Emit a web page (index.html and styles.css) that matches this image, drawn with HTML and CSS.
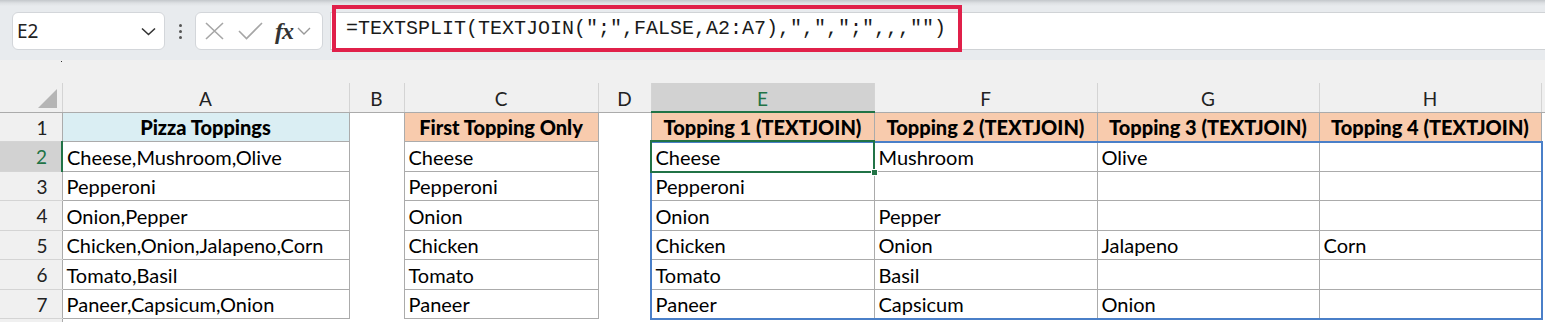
FILE: index.html
```html
<!DOCTYPE html>
<html lang="en">

    <head>

        <meta charset="UTF-8">
        <meta name="viewport" content="width=device-width, initial-scale=1.0">
        <title>TEXTSPLIT with TEXTJOIN</title>

        <link rel="stylesheet" href="styles.css">

    </head>

    <body>

        <header class="formula-bar">

            <div class="name-box">
                <span class="name-box-text">E2</span>
                <svg class="chevron" width="15" height="9" viewBox="0 0 15 9"><path d="M1 1.5 L7.5 7.5 L14 1.5" fill="none" stroke="#333" stroke-width="1.6"/></svg>
            </div>

            <div class="grip">
                <span></span><span></span><span></span>
            </div>

            <div class="fn-box">
                <svg width="19" height="18" viewBox="0 0 19 18"><path d="M1 1 L18 17 M18 1 L1 17" stroke="#a6a6a6" stroke-width="1.6"/></svg>
                <svg width="25" height="18" viewBox="0 0 25 18"><path d="M1 9 L8.5 16.5 L24 1" fill="none" stroke="#a6a6a6" stroke-width="1.6"/></svg>
                <span class="fx">fx</span>
                <svg class="chevron" width="14" height="8" viewBox="0 0 14 8"><path d="M1 1 L7 7 L13 1" fill="none" stroke="#999" stroke-width="1.4"/></svg>
            </div>

            <div class="formula-input">
                <div class="formula-highlight">=TEXTSPLIT(TEXTJOIN(";",FALSE,A2:A7),",",";",,,"")</div>
            </div>

        </header>

        <div class="strip"><span class="speck"></span></div>

        <main class="sheet">

            <table class="grid">
                <colgroup>
                    <col class="w-head">
                    <col class="w-a">
                    <col class="w-b">
                    <col class="w-c">
                    <col class="w-d">
                    <col class="w-e">
                    <col class="w-f">
                    <col class="w-g">
                    <col class="w-h">
                    <col class="w-rest">
                </colgroup>

                <tr class="col-heads">
                    <th class="corner"><span class="triangle"></span></th>
                    <th>A</th>
                    <th>B</th>
                    <th>C</th>
                    <th>D</th>
                    <th class="active-col">E</th>
                    <th>F</th>
                    <th>G</th>
                    <th>H</th>
                    <th class="rest"></th>
                </tr>

                <tr class="r-odd">
                    <td class="row-head">1</td>
                    <td class="cell title blue">Pizza Toppings</td>
                    <td></td>
                    <td class="cell title peach">First Topping Only</td>
                    <td></td>
                    <td class="cell title peach">Topping 1 (TEXTJOIN)</td>
                    <td class="cell title peach">Topping 2 (TEXTJOIN)</td>
                    <td class="cell title peach">Topping 3 (TEXTJOIN)</td>
                    <td class="cell title peach">Topping 4 (TEXTJOIN)</td>
                    <td></td>
                </tr>

                <tr class="r-even">
                    <td class="row-head active-row">2</td>
                    <td class="cell">Cheese,Mushroom,Olive</td>
                    <td></td>
                    <td class="cell">Cheese</td>
                    <td></td>
                    <td class="cell">Cheese</td>
                    <td class="cell">Mushroom</td>
                    <td class="cell">Olive</td>
                    <td class="cell"></td>
                    <td></td>
                </tr>

                <tr class="r-odd">
                    <td class="row-head">3</td>
                    <td class="cell">Pepperoni</td>
                    <td></td>
                    <td class="cell">Pepperoni</td>
                    <td></td>
                    <td class="cell">Pepperoni</td>
                    <td class="cell"></td>
                    <td class="cell"></td>
                    <td class="cell"></td>
                    <td></td>
                </tr>

                <tr class="r-even">
                    <td class="row-head">4</td>
                    <td class="cell">Onion,Pepper</td>
                    <td></td>
                    <td class="cell">Onion</td>
                    <td></td>
                    <td class="cell">Onion</td>
                    <td class="cell">Pepper</td>
                    <td class="cell"></td>
                    <td class="cell"></td>
                    <td></td>
                </tr>

                <tr class="r-odd">
                    <td class="row-head">5</td>
                    <td class="cell">Chicken,Onion,Jalapeno,Corn</td>
                    <td></td>
                    <td class="cell">Chicken</td>
                    <td></td>
                    <td class="cell">Chicken</td>
                    <td class="cell">Onion</td>
                    <td class="cell">Jalapeno</td>
                    <td class="cell">Corn</td>
                    <td></td>
                </tr>

                <tr class="r-even">
                    <td class="row-head">6</td>
                    <td class="cell">Tomato,Basil</td>
                    <td></td>
                    <td class="cell">Tomato</td>
                    <td></td>
                    <td class="cell">Tomato</td>
                    <td class="cell">Basil</td>
                    <td class="cell"></td>
                    <td class="cell"></td>
                    <td></td>
                </tr>

                <tr class="r-odd">
                    <td class="row-head">7</td>
                    <td class="cell">Paneer,Capsicum,Onion</td>
                    <td></td>
                    <td class="cell">Paneer</td>
                    <td></td>
                    <td class="cell">Paneer</td>
                    <td class="cell">Capsicum</td>
                    <td class="cell">Onion</td>
                    <td class="cell"></td>
                    <td></td>
                </tr>

                <tr class="r-last">
                    <td class="row-head"></td>
                    <td></td><td></td><td></td><td></td><td></td><td></td><td></td><td></td><td></td>
                </tr>
            </table>

            <!-- spill range outline and active cell sit on top of the grid -->
            <div class="spill-range"></div>
            <div class="active-cell"><span class="fill-handle"></span></div>

        </main>

    </body>

</html>
```

FILE: styles.css
```css
* 
    {
        margin: 0;
        padding: 0;
        box-sizing: border-box;
    }

body 
    {
        font-family: 'Lato', 'Liberation Sans', sans-serif;
        background-color: #f0f0f0;
        width: 1545px;
        height: 322px;
        overflow: hidden;
    }

/* ---------- formula bar ---------- */

.formula-bar 
    {
        height: 60px;
        display: flex;
        align-items: flex-start;
        background: linear-gradient(#c3c7cb 0, #dde0e3 3px, #e8ebee 6px, #e8ebee 100%);
        padding-top: 12px;
        padding-left: 12px;
    }

.name-box 
    {
        width: 153px;
        height: 38px;
        background-color: #fff;
        border: 1px solid #d3d6da;
        border-radius: 6px;
        display: flex;
        align-items: center;
        justify-content: space-between;
        padding: 0 8px 0 4px;
    }

.name-box-text 
    {
        font-family: 'Noto Sans', sans-serif;
        font-size: 19px;
        color: #222;
    }

.grip 
    {
        width: 30px;
        height: 38px;
        display: flex;
        flex-direction: column;
        align-items: center;
        justify-content: center;
        gap: 3px;
    }

.grip span 
    {
        width: 3px;
        height: 3px;
        background-color: #555;
        border-radius: 50%;
    }

.fn-box 
    {
        width: 128px;
        height: 38px;
        background-color: #fff;
        border: 1px solid #d3d6da;
        border-radius: 6px;
        display: flex;
        align-items: center;
        padding-left: 9px;
        gap: 14px;
    }

.fn-box .fx 
    {
        font-family: 'Liberation Serif', serif;
        font-style: italic;
        font-weight: bold;
        font-size: 24px;
        color: #333;
        margin-left: -2px;
        margin-right: -10px;
        letter-spacing: -1px;
    }

.formula-input 
    {
        flex: 1;
        height: 38px;
        margin-left: 7px;
        border-left: 1px solid #d0d3d6;
        border-top: 1px solid #d0d3d6;
        border-bottom: 1px solid #cfd2d5;
        background-color: #fff;
        position: relative;
    }

.formula-highlight 
    {
        position: absolute;
        left: 1px;
        top: -8px;
        width: 630px;
        height: 47px;
        border: 4px solid #e0204a;
        font-family: 'Liberation Mono', monospace;
        font-size: 20px;
        color: #1a1a1a;
        padding-left: 10px;
        line-height: 39px;
        white-space: nowrap;
    }

.strip 
    {
        height: 23px;
        position: relative;
    }

.speck 
    {
        position: absolute;
        left: 61px;
        top: 1px;
        width: 1px;
        height: 1px;
        background-color: #333;
    }

/* ---------- sheet grid ---------- */

.sheet 
    {
        position: relative;
    }

.grid 
    {
        border-collapse: collapse;
        table-layout: fixed;
        width: 1545px;
        font-size: 20px;
        color: #000;
    }

.w-head { width: 62px; }
.w-a { width: 287px; }
.w-b { width: 55px; }
.w-c { width: 194px; }
.w-d { width: 53px; }
.w-e { width: 223px; }
.w-f { width: 223px; }
.w-g { width: 222px; }
.w-h { width: 222px; }
.w-rest { width: 4px; }

.col-heads th 
    {
        height: 29px;
        font-weight: normal;
        font-size: 19px;
        color: #222;
        background-color: #f0f0f0;
        border-left: 1px solid #d4d4d4;
        border-bottom: 1px solid #ababab;
        padding-top: 2px;
    }

.col-heads .corner 
    {
        border-left: none;
        position: relative;
    }

.triangle 
    {
        position: absolute;
        right: 5px;
        bottom: 4px;
        width: 0;
        height: 0;
        border-left: 19px solid transparent;
        border-bottom: 19px solid #b5b5b5;
    }

.col-heads .active-col 
    {
        background-color: #d2d2d2;
        color: #217346;
        border-bottom: 2px solid #217346;
    }

.col-heads .rest 
    {
        background-color: #f0f0f0;
    }

.r-odd { height: 29px; }
.r-even { height: 30px; }
.r-last { height: 4px; }

td 
    {
        background-color: #fff;
        padding: 0 4px;
        white-space: nowrap;
        overflow: hidden;
        vertical-align: middle;
        padding-top: 1px;
    }

.row-head 
    {
        background-color: #f0f0f0;
        text-align: right;
        padding-right: 14px;
        font-size: 19px;
        color: #222;
        border-bottom: 1px solid #d4d4d4;
        border-right: 1px solid #ababab;
    }

.row-head.active-row 
    {
        background-color: #d2d2d2;
        color: #217346;
        border-right: 2px solid #217346;
    }

.cell 
    {
        border: 1px solid #ababab;
    }

.title 
    {
        font-weight: 900;
        font-size: 20px;
        text-align: center;
    }

.blue 
    {
        background-color: #daeef3;
    }

.peach 
    {
        background-color: #f8cbad;
    }

/* overlays */

.spill-range 
    {
        position: absolute;
        left: 650px;
        top: 58px;
        width: 893px;
        height: 179px;
        border: 2px solid #4a7fc8;
        pointer-events: none;
    }

.active-cell 
    {
        position: absolute;
        left: 650px;
        top: 57px;
        width: 225px;
        height: 33px;
        border: 2px solid #217346;
    }

.fill-handle 
    {
        position: absolute;
        right: -5px;
        bottom: -5px;
        width: 7px;
        height: 7px;
        background-color: #217346;
        border: 1px solid #fff;
    }
```
